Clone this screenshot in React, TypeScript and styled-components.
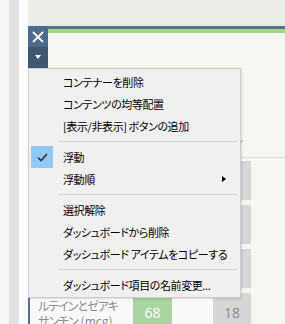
import styled, { createGlobalStyle } from "styled-components";

const GlobalStyle = createGlobalStyle`
  html, body {
    margin: 0;
    padding: 0;
    background: #f6f6f1;
  }
  body {
    font-family: "Noto Sans CJK JP", "Noto Sans", sans-serif;
    overflow: hidden;
  }
`;

const Page = styled.div`
  display: flex;
  width: 285px;
  height: 324px;
  overflow: hidden;
`;

const Rail = styled.div`
  width: 28px;
  flex-shrink: 0;
  display: flex;
`;

const RailStripe = styled.div<{ $w: number; $c: string }>`
  width: ${(p) => p.$w}px;
  background: ${(p) => p.$c};
`;

const Main = styled.div`
  flex: 1;
  display: flex;
  flex-direction: column;
  min-height: 0;
`;

const TopBand = styled.div`
  height: 26px;
  flex-shrink: 0;
  background: #ecece6;
`;

const Item = styled.div`
  position: relative;
  flex: 1;
  min-height: 0;
`;

const ItemBody = styled.div`
  border-top: 3px solid #55708c;
  background: #f6f6f1;
  height: 100%;
  overflow: hidden;
`;

const GreenBar = styled.div`
  height: 4px;
  margin-left: 20px;
  background: #a6d47c;
`;

const Heading = styled.div`
  height: 125px;
  display: flex;
  align-items: flex-end;
  padding-left: 170px;
  border-bottom: 1px solid #dcdcd6;
  box-sizing: border-box;
`;

const HeadingText = styled.span`
  font-size: 12px;
  color: #8a8a8a;
  line-height: 16px;
  padding-bottom: 3px;
  font-feature-settings: "palt";
`;

const Rows = styled.div`
  display: flex;
  flex-direction: column;
  gap: 5px;
  padding-top: 3px;
`;

const Row = styled.div`
  display: grid;
  grid-template-columns: 103px 39px 41px 38px 1fr;
  height: 39px;
  flex-shrink: 0;
  border-left: 2px solid #55708c;
  background: #fafafa;
`;

const Label = styled.div`
  padding: 5px 0 0 8px;
  font-size: 12px;
  line-height: 15px;
  letter-spacing: -1px;
  color: #8c8c8c;
  font-feature-settings: "palt";
  white-space: nowrap;
  overflow: hidden;
`;

const Unit = styled.span`
  letter-spacing: 0;
  margin-left: 3px;
`;

const Tile = styled.div<{ $tone: "green" | "gray" }>`
  display: flex;
  align-items: center;
  justify-content: center;
  font-family: "Open Sans", "Noto Sans", sans-serif;
  font-size: 14px;
  background: ${(p) => (p.$tone === "green" ? "#a8d4a0" : "#d7d5d5")};
  color: ${(p) => (p.$tone === "green" ? "#ffffff" : "#8a8a96")};
`;

const Gap = styled.div`
  background: #fafafa;
`;

const Rest = styled.div`
  background: #f6f6f1;
`;

const Buttons = styled.div`
  position: absolute;
  left: 0;
  top: 0;
  width: 20px;
  display: flex;
  flex-direction: column;
`;

const CtrlButton = styled.div<{ $dark?: boolean }>`
  height: 21px;
  display: flex;
  align-items: center;
  justify-content: center;
  background: ${(p) => (p.$dark ? "#3e5874" : "#4c6c8c")};
`;

const DownCaret = styled.div`
  width: 0;
  height: 0;
  margin-top: -2px;
  border-left: 3.5px solid transparent;
  border-right: 3.5px solid transparent;
  border-top: 4px solid #ffffff;
`;

const Menu = styled.div`
  position: absolute;
  left: 0;
  top: 42px;
  width: 213px;
  box-sizing: border-box;
  background: #f0f0f0;
  border: 1px solid #cccccc;
  padding: 2px 0 1px;
  box-shadow: 1px 1px 2px rgba(0, 0, 0, 0.12);
`;

const MenuItem = styled.div`
  position: relative;
  display: flex;
  align-items: center;
  height: 22px;
  padding-left: 2px;
  font-size: 11px;
  letter-spacing: -0.4px;
  color: #000;
  font-feature-settings: "palt";
  white-space: nowrap;
`;

const CheckSlot = styled.div<{ $on?: boolean }>`
  width: 22px;
  height: 22px;
  display: flex;
  align-items: center;
  justify-content: center;
  background: ${(p) => (p.$on ? "#90c8f6" : "transparent")};
  margin-right: 10px;
`;

const SubArrow = styled.div`
  position: absolute;
  right: 14px;
  top: 8px;
  width: 0;
  height: 0;
  border-top: 3.5px solid transparent;
  border-bottom: 3.5px solid transparent;
  border-left: 4px solid #000;
`;

const Separator = styled.div`
  height: 1px;
  margin: 4px 3px 4px 30px;
  background: #d2d2d2;
`;

type Entry = { label?: string; checked?: boolean; sub?: boolean; sep?: boolean };

const entries: Entry[] = [
  { label: "コンテナーを削除" },
  { label: "コンテンツの均等配置" },
  { label: "[表示/非表示] ボタンの追加" },
  { sep: true },
  { label: "浮動", checked: true },
  { label: "浮動順", sub: true },
  { sep: true },
  { label: "選択解除" },
  { label: "ダッシュボードから削除" },
  { label: "ダッシュボード アイテムをコピーする" },
  { sep: true },
  { label: "ダッシュボード項目の名前変更..." },
];

const rows = [
  { label: ["ビタミンA", "", "(µg)"], a: "72", b: "21" },
  { label: ["ビタミンC", "", "(mg)"], a: "54", b: "12" },
  { label: ["ビタミンE", "", "(mg)"], a: "61", b: "15" },
  { label: ["ルテインとゼアキ", "サンチン", "(mcg)"], a: "68", b: "18" },
];

export default function App() {
  return (
    <>
      <GlobalStyle />
      <Page>
        <Rail>
          <RailStripe $w={9} $c="#f7f7f7" />
          <RailStripe $w={10} $c="#e1e1e1" />
          <RailStripe $w={9} $c="#fbfbfb" />
        </Rail>
        <Main>
          <TopBand />
          <Item>
            <ItemBody>
              <GreenBar />
              <Heading>
                <HeadingText>カタログ</HeadingText>
              </Heading>
              <Rows>
                {rows.map((r) => (
                  <Row key={r.a}>
                    <Label>
                      {r.label[0]}
                      <br />
                      {r.label[1]}
                      <Unit>{r.label[2]}</Unit>
                    </Label>
                    <Tile $tone="green">{r.a}</Tile>
                    <Gap />
                    <Tile $tone="gray">{r.b}</Tile>
                    <Rest />
                  </Row>
                ))}
              </Rows>
            </ItemBody>
            <Buttons>
              <CtrlButton>
                <svg width="12" height="12" viewBox="0 0 12 12">
                  <path d="M1 1 L11 11 M11 1 L1 11" stroke="#fff" strokeWidth="1.8" fill="none" />
                </svg>
              </CtrlButton>
              <CtrlButton $dark>
                <DownCaret />
              </CtrlButton>
            </Buttons>
            <Menu>
              {entries.map((e, i) =>
                e.sep ? (
                  <Separator key={i} />
                ) : (
                  <MenuItem key={i}>
                    <CheckSlot $on={e.checked}>
                      {e.checked && (
                        <svg width="11" height="9" viewBox="0 0 11 9">
                          <path d="M1 4.5 L4 7.5 L10 1" stroke="#333" strokeWidth="1.6" fill="none" />
                        </svg>
                      )}
                    </CheckSlot>
                    {e.label}
                    {e.sub && <SubArrow />}
                  </MenuItem>
                )
              )}
            </Menu>
          </Item>
        </Main>
      </Page>
    </>
  );
}
